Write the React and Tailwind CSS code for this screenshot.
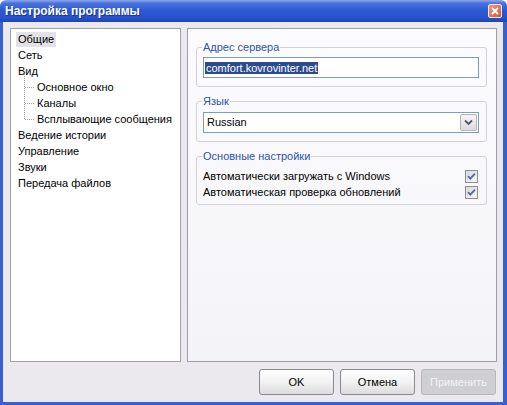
import React from "react";

function Check() {
  return (
    <span className="w-[13px] h-[13px] border border-[#8d8e94] bg-gradient-to-br from-[#d9d9dd] to-[#f7f7f9] flex items-center justify-center">
      <svg width="11" height="11" viewBox="0 0 11 11">
        <path d="M2 5.2 L4.3 7.6 L9 2.6" fill="none" stroke="#5a6a98" strokeWidth="1.8" />
      </svg>
    </span>
  );
}

function TreeItem({ children, active, child }) {
  return (
    <div className={"h-[16px] flex items-center " + (child ? "pl-[19px]" : "")}>
      <span className={"px-[2px] h-[15px] leading-[15px] " + (active ? "bg-[#e3e2e6]" : "")}>{children}</span>
    </div>
  );
}

function Btn({ children, disabled }) {
  return (
    <div
      className={
        "w-[75px] h-[26px] rounded-[3px] border flex items-center justify-center " +
        (disabled
          ? "border-[#b7b6ba] bg-[#cfced2] text-[#f3f3f5]"
          : "border-[#8a898d] bg-gradient-to-b from-[#fdfdfd] via-[#f2f2f2] to-[#dcdcde] text-black")
      }
    >
      {children}
    </div>
  );
}

export default function App() {
  return (
    <div className="w-[507px] h-[405px] flex flex-col font-['Liberation_Sans',Arial,sans-serif] text-[11px] text-black overflow-hidden">
      {/* title bar */}
      <div className="h-[22px] rounded-t-[6px] bg-[linear-gradient(to_bottom,#8ea8ec_0%,#4a72dc_15%,#2d5ad3_45%,#2852cc_80%,#1c45b8_100%)] flex items-center justify-between pl-[5px] pr-[5px]">
        <span className="text-white font-bold text-[12px] [text-shadow:1px_1px_0_#1a3488]">Настройка программы</span>
        <span className="w-[14px] h-[14px] rounded-[2px] border border-[#f2e8e4] bg-gradient-to-br from-[#e99a80] to-[#cf5a36] flex items-center justify-center">
          <svg width="10" height="10" viewBox="0 0 10 10">
            <path d="M2 2 L8 8 M8 2 L2 8" stroke="white" strokeWidth="1.8" />
          </svg>
        </span>
      </div>
      {/* body */}
      <div className="flex-1 flex flex-col bg-[#ebe9ed] border-l-[3px] border-r-4 border-b-[3px] border-[#3760d2] pl-[7px] pr-[6px] pt-[6px] pb-[7px]">
        <div className="h-[334px] flex gap-[6px]">
          {/* tree */}
          <div className="w-[171px] bg-white border border-[#a29fa8] pl-[5px] pt-[2px] flex flex-col">
            <TreeItem active>Общие</TreeItem>
            <TreeItem>Сеть</TreeItem>
            <TreeItem>Вид</TreeItem>
            <div className="relative">
              <div className="absolute left-[8px] top-[-5px] h-[45px] border-l border-dotted border-[#a0a0a0]" />
              <div className="absolute left-[9px] top-[8px] w-[9px] border-t border-dotted border-[#a0a0a0]" />
              <div className="absolute left-[9px] top-[24px] w-[9px] border-t border-dotted border-[#a0a0a0]" />
              <div className="absolute left-[9px] top-[40px] w-[9px] border-t border-dotted border-[#a0a0a0]" />
              <TreeItem child>Основное окно</TreeItem>
              <TreeItem child>Каналы</TreeItem>
              <TreeItem child>Всплывающие сообщения</TreeItem>
            </div>
            <TreeItem>Ведение истории</TreeItem>
            <TreeItem>Управление</TreeItem>
            <TreeItem>Звуки</TreeItem>
            <TreeItem>Передача файлов</TreeItem>
          </div>
          {/* right panel */}
          <div className="w-[310px] bg-gradient-to-b from-[#fcfcfe] to-[#f4f4f8] border border-[#9c9fa8] pl-[8px] pt-[12px] flex flex-col gap-[8px]">
            <fieldset className="w-[291px] border border-[#d2d1d8] rounded-[3px] pl-[6px] pb-[8px]">
              <legend className="h-[13px] leading-[13px] px-[1px] -ml-[1px] text-[#2a53ad]">Адрес сервера</legend>
              <div className="mt-[3px] w-[276px] h-[21px] border border-[#7f9db9] bg-white flex items-center pl-[1px]">
                <span className="bg-[#2d4a91] text-white h-[12px] leading-[12px] px-[1px]">comfort.kovrovinter.net</span>
              </div>
            </fieldset>
            <fieldset className="w-[291px] border border-[#d2d1d8] rounded-[3px] pl-[6px] pb-[8px]">
              <legend className="h-[13px] leading-[13px] px-[1px] -ml-[1px] text-[#2a53ad]">Язык</legend>
              <div className="mt-[4px] w-[276px] h-[21px] border border-[#7f9db9] bg-white flex items-center justify-between pl-[3px] pr-[1px]">
                <span>Russian</span>
                <span className="w-[17px] h-[17px] rounded-[2px] border border-[#b4b4ba] bg-gradient-to-b from-[#f5f5f7] to-[#dcdce0] flex items-center justify-center">
                  <svg width="9" height="7" viewBox="0 0 9 7">
                    <path d="M1 1.5 L4.5 5 L8 1.5" fill="none" stroke="#55575e" strokeWidth="1.8" />
                  </svg>
                </span>
              </div>
            </fieldset>
            <fieldset className="w-[291px] border border-[#d2d1d8] rounded-[3px] pl-[6px] pb-[4px]">
              <legend className="h-[13px] leading-[13px] px-[1px] -ml-[1px] text-[#2a53ad]">Основные настройки</legend>
              <div className="mt-[5px] w-[276px] flex flex-col">
                <div className="h-[16px] flex items-center justify-between pr-[1px]">
                  <span>Автоматически загружать с Windows</span>
                  <Check />
                </div>
                <div className="h-[16px] flex items-center justify-between pr-[1px]">
                  <span>Автоматическая проверка обновлений</span>
                  <Check />
                </div>
              </div>
            </fieldset>
          </div>
        </div>
        <div className="mt-[7px] flex justify-end gap-[6px] pr-[1px]">
          <Btn>OK</Btn>
          <Btn>Отмена</Btn>
          <Btn disabled>Применить</Btn>
        </div>
      </div>
    </div>
  );
}
